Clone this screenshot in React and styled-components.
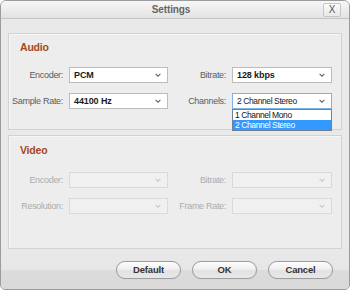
import React from 'react';
import styled, { createGlobalStyle } from 'styled-components';

const GlobalStyle = createGlobalStyle`
  html, body {
    margin: 0;
    padding: 0;
    background: #ffffff;
  }
  body {
    font-family: "Liberation Sans", Arial, sans-serif;
  }
  * {
    box-sizing: border-box;
  }
`;

const Chevron = ({ disabled }) => (
  <svg width="6" height="4" viewBox="0 0 6 4">
    <polyline
      points="0.6,0.8 3,3.2 5.4,0.8"
      fill="none"
      stroke={disabled ? '#c8c8c8' : '#666'}
      strokeWidth="1.1"
    />
  </svg>
);

const Select = ({ value, disabled, focused, open, options }) => (
  <SelectWrap>
    <SelectBox $disabled={disabled} $focused={focused}>
      <SelectValue $bold={!focused}>{value}</SelectValue>
      <Chevron disabled={disabled} />
    </SelectBox>
    {open && (
      <OptionList>
        {options.map((opt) => (
          <OptionItem key={opt} $selected={opt === value}>
            {opt}
          </OptionItem>
        ))}
      </OptionList>
    )}
  </SelectWrap>
);

const App = () => {
  return (
    <>
      <GlobalStyle />
      <Window>
        <TitleBar>
          <span />
          <Title>Settings</Title>
          <CloseButton>X</CloseButton>
        </TitleBar>

        <Content>
          <Panel $top={7} $bottom={20}>
            <PanelTitle>Audio</PanelTitle>
            <FieldGrid $offset={14}>
              <Label>Encoder:</Label>
              <Select value="PCM" />
              <Label>Bitrate:</Label>
              <Select value="128 kbps" />
              <Label>Sample Rate:</Label>
              <Select value="44100 Hz" />
              <Label>Channels:</Label>
              <Select
                value="2 Channel Stereo"
                focused
                open
                options={['1 Channel Mono', '2 Channel Stereo']}
              />
            </FieldGrid>
          </Panel>

          <Panel $top={8} $bottom={34}>
            <PanelTitle>Video</PanelTitle>
            <FieldGrid $offset={16}>
              <Label $disabled>Encoder:</Label>
              <Select disabled />
              <Label $disabled>Bitrate:</Label>
              <Select disabled />
              <Label $disabled>Resolution:</Label>
              <Select disabled />
              <Label $disabled>Frame Rate:</Label>
              <Select disabled />
            </FieldGrid>
          </Panel>
        </Content>

        <Footer>
          <PillButton>Default</PillButton>
          <PillButton>OK</PillButton>
          <PillButton>Cancel</PillButton>
        </Footer>
      </Window>
    </>
  );
};

const Window = styled.div`
  width: 350px;
  height: 290px;
  display: flex;
  flex-direction: column;
  border: 1px solid #9c9c9c;
  border-radius: 6px 6px 5px 5px;
  overflow: hidden;
  background: #e9e9e9;
`;

const TitleBar = styled.div`
  height: 18px;
  flex: none;
  display: grid;
  grid-template-columns: 1fr auto 1fr;
  align-items: center;
  padding-right: 8px;
  border-bottom: 1px solid #c4c4c4;
  background: linear-gradient(to bottom, #f7f7f7 0%, #ebebeb 60%, #e2e2e2 100%);
`;

const Title = styled.div`
  font-size: 10px;
  font-weight: bold;
  color: #666;
  letter-spacing: -0.1px;
  line-height: 17px;
`;

const CloseButton = styled.div`
  justify-self: end;
  width: 18px;
  height: 14px;
  margin-top: 1px;
  border: 1px solid #c6c6c6;
  border-radius: 2px;
  background: linear-gradient(to bottom, #fbfbfb, #e8e8e8);
  font-size: 10px;
  line-height: 12px;
  text-align: center;
  color: #555;
`;

const Content = styled.div`
  display: flex;
  flex-direction: column;
  gap: 5px;
  padding: 14px 7px 0 7px;
`;

const Panel = styled.div`
  border: 1px solid #d2d2d2;
  box-shadow: inset 1px 1px 0 #f6f6f6;
  background: #ededed;
  padding: ${(p) => p.$top}px 9px ${(p) => p.$bottom}px 0;
`;

const PanelTitle = styled.div`
  padding-left: 11px;
  font-size: 10.5px;
  font-weight: bold;
  line-height: 12px;
  color: #a4491b;
  letter-spacing: -0.2px;
`;

const FieldGrid = styled.div`
  margin-top: ${(p) => p.$offset}px;
  display: grid;
  grid-template-columns: 60px 99px 64px 100px;
  grid-auto-rows: 16px;
  row-gap: 10px;
  align-items: center;
`;

const Label = styled.div`
  text-align: right;
  padding-right: 6px;
  font-size: 9px;
  letter-spacing: -0.3px;
  white-space: nowrap;
  color: ${(p) => (p.$disabled ? '#acacac' : '#5c5c5c')};
`;

const SelectWrap = styled.div`
  position: relative;
  height: 16px;
`;

const SelectBox = styled.div`
  height: 16px;
  display: flex;
  align-items: center;
  justify-content: space-between;
  padding: 0 6px 0 4px;
  border: 1px solid
    ${(p) => (p.$focused ? '#7fb2e6' : p.$disabled ? '#dadada' : '#bcbcbc')};
  background: ${(p) => (p.$disabled ? '#f0f0f0' : '#ffffff')};
`;

const SelectValue = styled.span`
  font-size: ${(p) => (p.$bold ? '9px' : '8.5px')};
  font-weight: ${(p) => (p.$bold ? 'bold' : 'normal')};
  letter-spacing: ${(p) => (p.$bold ? '-0.1px' : '-0.4px')};
  color: #1a1a1a;
  white-space: nowrap;
`;

const OptionList = styled.div`
  position: absolute;
  left: 0;
  top: 16px;
  width: 100%;
  border: 1px solid #6f7f94;
  background: #ffffff;
  z-index: 2;
`;

const OptionItem = styled.div`
  height: 10px;
  line-height: 10px;
  padding-left: 2px;
  font-size: 8.5px;
  letter-spacing: -0.4px;
  white-space: nowrap;
  color: ${(p) => (p.$selected ? '#ffffff' : '#111')};
  background: ${(p) => (p.$selected ? '#3399ff' : '#ffffff')};
`;

const Footer = styled.div`
  flex: 1;
  display: flex;
  justify-content: flex-end;
  align-items: flex-start;
  gap: 11px;
  padding: 12px 16px 0 0;
  background: linear-gradient(to bottom, #e9e9e9 0, #e6e6e6 21px, #dcdcdc 21px, #d9d9d9 100%);
`;

const PillButton = styled.div`
  width: 65px;
  height: 18px;
  border: 1px solid #9d9d9d;
  border-radius: 9px;
  background: linear-gradient(to bottom, #fdfdfd 0%, #f0f0f0 45%, #e2e2e2 55%, #e8e8e8 100%);
  box-shadow: 0 0 1px rgba(0, 0, 0, 0.15);
  font-size: 9.5px;
  font-weight: bold;
  line-height: 16px;
  text-align: center;
  color: #333;
  letter-spacing: -0.2px;
`;

export default App;
